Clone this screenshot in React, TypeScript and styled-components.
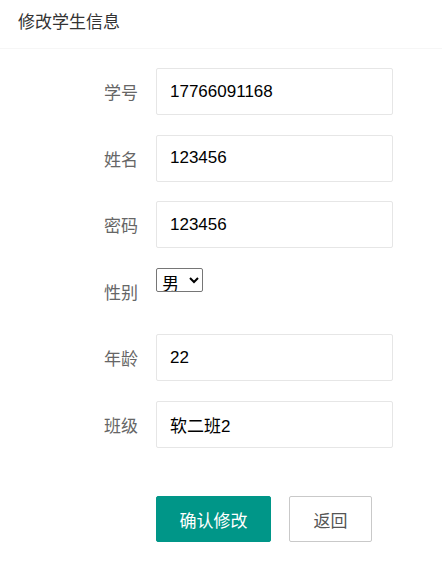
import React, { useState } from 'react';
import styled, { createGlobalStyle } from 'styled-components';

const GlobalStyle = createGlobalStyle`
    body {
        margin: 0;
        background: #fff;
        font-family: "Liberation Sans", "Noto Sans CJK SC", sans-serif;
    }
`

const fields = [
    { label: '学号', value: '17766091168' },
    { label: '姓名', value: '123456' },
    { label: '密码', value: '123456' },
]

const fields2 = [
    { label: '年龄', value: '22' },
    { label: '班级', value: '软二班2' },
]

const App: React.FC = () => {
    const [sex, setSex] = useState('男');

    const renderField = (f: { label: string, value: string }) => (
        <Row key={f.label}>
            <Label>{f.label}</Label>
            <Input defaultValue={f.value} />
        </Row>
    )

    return (<Page>
        <GlobalStyle />
        <Header>修改学生信息</Header>
        <Form>
            {fields.map(renderField)}
            <Row>
                <Label>性别</Label>
                <SelectBox>
                    <Select value={sex} onChange={e => setSex(e.target.value)}>
                        <option value="男">男</option>
                        <option value="女">女</option>
                    </Select>
                </SelectBox>
            </Row>
            {fields2.map(renderField)}
            <ButtonRow>
                <Button primary>确认修改</Button>
                <Button>返回</Button>
            </ButtonRow>
        </Form>
    </Page>);
}

const Page = styled.div`
    width: 442px;
    height: 566px;
    background: #fff;
`

const Header = styled.div`
    height: 48px;
    line-height: 42px;
    padding: 0 18px;
    font-size: 17px;
    color: #333;
    border-bottom: 1px solid #f6f6f6;
    font-family: "Noto Sans CJK SC", sans-serif;
`

const Form = styled.div`
    padding-top: 19px;
    display: flex;
    flex-direction: column;
    gap: 19.5px;
`

const Row = styled.div`
    display: flex;
    align-items: flex-start;
    height: 47px;
`

const Label = styled.label`
    width: 138px;
    box-sizing: border-box;
    text-align: right;
    height: 47px;
    line-height: 47px;
    font-size: 17px;
    color: #666;
    font-family: "Noto Sans CJK SC", sans-serif;
    flex-shrink: 0;
    margin-right: 18px;
`

const Input = styled.input`
    width: 237px;
    height: 47px;
    box-sizing: border-box;
    border: 1px solid #e6e6e6;
    border-radius: 2px;
    padding: 0 12px 0 13px;
    font-size: 17px;
    color: #000;
    font-family: "Liberation Sans", "Noto Sans CJK SC", sans-serif;
    outline: none;
    background: #fff;
`

const SelectBox = styled.div`
    height: 47px;
`

const Select = styled.select`
    height: 24px;
    width: 47px;
    padding: 0 0 0 1px;
    font-size: 17px;
    color: #000;
    font-family: "Noto Sans CJK SC", sans-serif;
    border: 1px solid #767676;
    border-radius: 2px;
    background: #fff;
`

const ButtonRow = styled.div`
    display: flex;
    gap: 18px;
    padding-left: 156px;
    margin-top: 29px;
`

const Button = styled.button<{ primary?: boolean }>`
    height: 46px;
    padding: 0 ${p => p.primary ? '22px' : '23px'};
    min-width: ${p => p.primary ? '115px' : '83px'};
    box-sizing: border-box;
    font-size: 17px;
    font-family: "Noto Sans CJK SC", sans-serif;
    border-radius: 2px;
    cursor: pointer;
    border: 1px solid ${p => p.primary ? '#009688' : '#c9c9c9'};
    background: ${p => p.primary ? '#009688' : '#fff'};
    color: ${p => p.primary ? '#fff' : '#555'};
`

export default App;
